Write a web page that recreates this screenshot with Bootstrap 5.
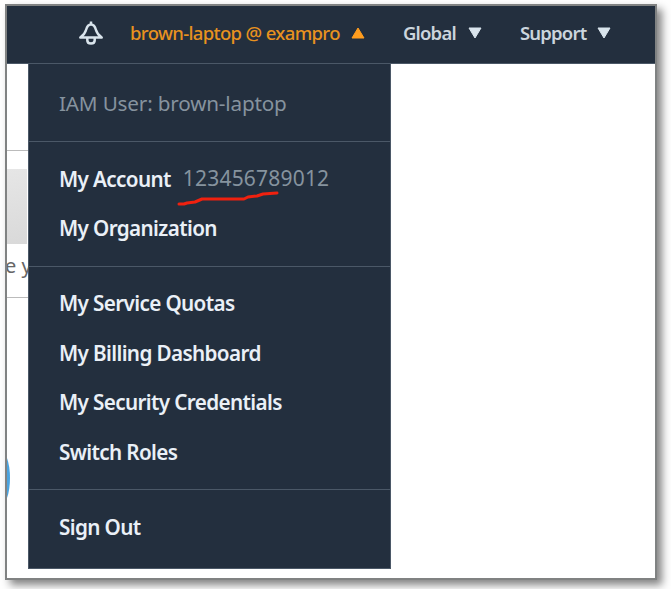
<!DOCTYPE html>
<html lang="en">
<head>
<meta charset="utf-8">
<meta name="viewport" content="width=device-width, initial-scale=1">
<title>Account menu</title>
<link href="https://cdn.jsdelivr.net/npm/bootstrap@5.3.0/dist/css/bootstrap.min.css" rel="stylesheet">
<style>
body{background:#fefefe;font-family:"Noto Sans","Open Sans",sans-serif;height:589px;padding:4px 0 0 5px}
.frame{width:652px;height:576px;border:2px solid #808282;background:#fff;box-shadow:5px 5px 8px rgba(0,0,0,.48)}
.topbar{height:58px;background:#232f3e;border-bottom:1px solid #4b5867;padding:0 0 4px 71px;color:#cbd5dd;font-size:18.5px;line-height:26px;font-weight:600;letter-spacing:-.82px;white-space:nowrap}
.bell{width:26px;height:26px;margin-right:26px}
.tri{width:14px;height:12px;flex:none}
.user{color:#e8921f;width:235px;font-weight:500;letter-spacing:-.65px;margin-right:38px}
.region{width:79px;margin-right:38px}
.support{width:91px}
.page-strip{width:21px;height:514px;overflow:hidden;white-space:nowrap}
.strip-top{height:87px;border-bottom:1px solid #bbb}
.strip-mid{height:147px;padding-top:18px;border-bottom:1px solid #bbb}
.thumb{width:20px;height:75px;background:linear-gradient(170deg,#e6e6e6,#d9d9d9)}
.snippet{font-size:20px;line-height:30px;margin:7px 0 0 -2px;color:#666}
.disc{width:20px;height:56px;border-radius:50%;background:#4aa3df;margin:152px 0 0 -17px}
.account-menu{width:363px;height:505px;background:#232f3e;border:1px solid #4b5867;border-top:0;font-size:20.7px;font-weight:600;letter-spacing:-.64px;color:#eaf0f7;white-space:nowrap}
.group{padding:12.5px 30px}
.group + .group{border-top:1px solid #4b5867}
.group.identity{height:77px;padding-top:15px}
.entry{height:49.4px;display:flex;align-items:center}
.dim{color:#86939e;font-weight:400;letter-spacing:-.18px}
.number{font-size:21px;letter-spacing:.2px;margin-left:12px}
.scribble{width:102px;height:14px;left:119px;top:37px;overflow:visible}
</style>
<script src="https://cdn.jsdelivr.net/npm/bootstrap@5.3.0/dist/js/bootstrap.bundle.min.js"></script>
</head>
<body>
<main class="frame">
  <nav class="topbar d-flex align-items-center">
    <svg class="bell" viewBox="0 0 26 26" fill="none" stroke="#d9e4ec" stroke-width="2.5" stroke-linejoin="round"><path d="M2.300 17.600C6.600 14.500 7.300 12.800 8.100 9.800 9 6.300 10.300 4.400 13 4.400s4 1.900 4.900 5.400c.8 3 1.500 4.700 5.800 7.800z"/><path d="M9.300 18v2.200c0 4.500 7.400 4.500 7.400 0V18M13 1.500v3"/></svg>
    <div class="user d-flex align-items-center justify-content-between"><span>brown-laptop @ exampro</span><svg class="tri" viewBox="0 0 14 12"><path d="M7 1l6 10H1z" fill="#ff9d1e" stroke="#ff9d1e" stroke-linejoin="round"/></svg></div>
    <div class="region d-flex align-items-center justify-content-between"><span>Global</span><svg class="tri" viewBox="0 0 14 12"><path d="M1 1h12L7 11z" fill="#d9e4ec" stroke="#d9e4ec" stroke-linejoin="round"/></svg></div>
    <div class="support d-flex align-items-center justify-content-between"><span>Support</span><svg class="tri" viewBox="0 0 14 12"><path d="M1 1h12L7 11z" fill="#d9e4ec" stroke="#d9e4ec" stroke-linejoin="round"/></svg></div>
  </nav>
  <div class="d-flex">
    <div class="page-strip">
      <div class="strip-top"></div>
      <div class="strip-mid"><div class="thumb"></div><div class="snippet">e y</div></div>
      <div class="disc"></div>
    </div>
    <div class="account-menu">
      <div class="group identity"><div class="entry dim"><span>IAM User: brown-laptop</span></div></div>
      <div class="group">
        <div class="entry position-relative"><span>My Account</span><span class="dim number">123456789012</span>
          <svg class="scribble position-absolute" viewBox="0 0 102 14" fill="none" stroke="#f0210f" stroke-width="3" stroke-linecap="round" stroke-linejoin="round"><path d="M1 12h5l3-1 8-1 7-3h42l4-2 9-1 6-2 14-1"/></svg></div>
        <div class="entry"><span>My Organization</span></div>
      </div>
      <div class="group">
        <div class="entry"><span>My Service Quotas</span></div>
        <div class="entry"><span>My Billing Dashboard</span></div>
        <div class="entry"><span>My Security Credentials</span></div>
        <div class="entry"><span>Switch Roles</span></div>
      </div>
      <div class="group"><div class="entry"><span>Sign Out</span></div></div>
    </div>
  </div>
</main>
</body>
</html>
